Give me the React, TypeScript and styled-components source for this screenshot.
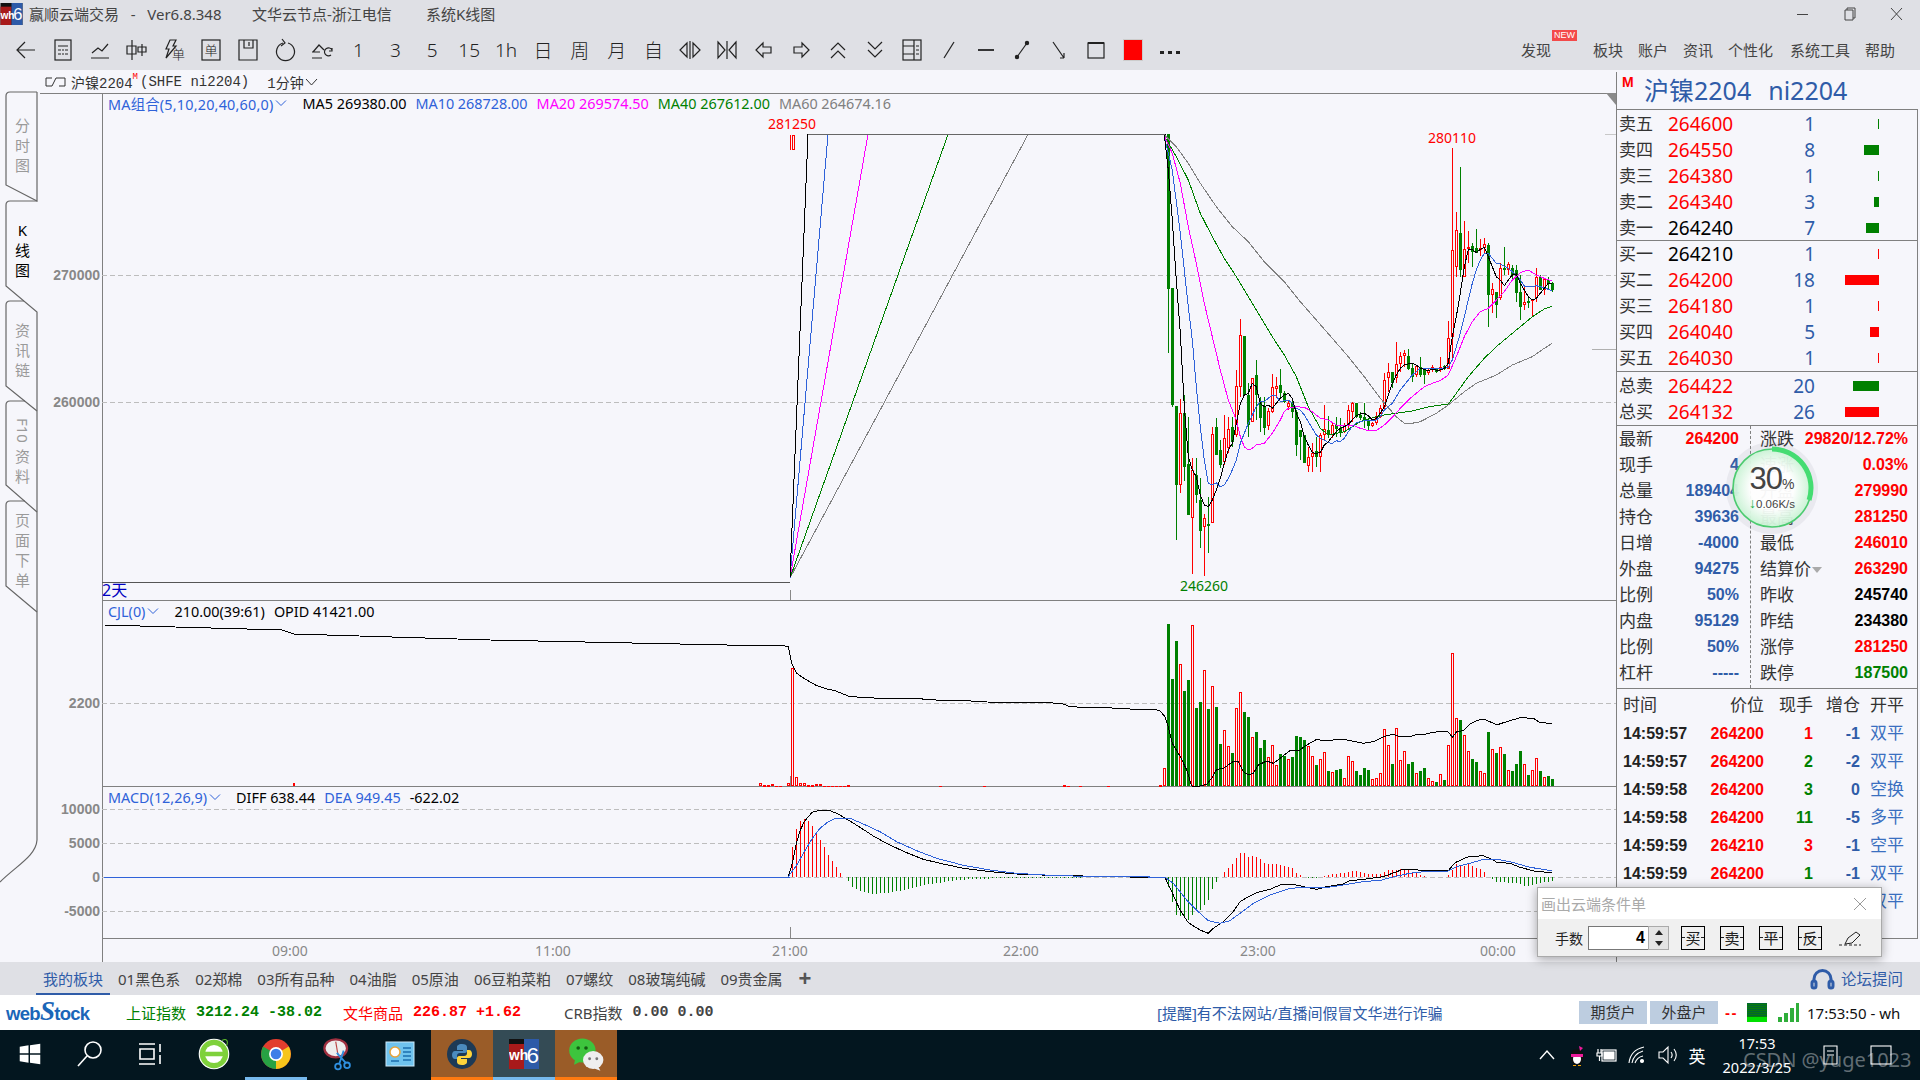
import React from "react";
import styled, { createGlobalStyle } from "styled-components";

const SANS = `"Noto Sans", "Noto Sans CJK SC", sans-serif`;
const ARIAL = `"Liberation Sans", "Noto Sans CJK SC", sans-serif`;
const MONO = `"Liberation Mono", "Noto Sans CJK SC", monospace`;
const BG = "#f6f6fb";
const RED = "#ff0000";
const GREEN = "#008000";
const BLUE = "#2f5ca8";
const LINEBLUE = "#2f62d9";
const RULE = "#808080";

const Global = createGlobalStyle`
  html, body { margin: 0; padding: 0; background: ${BG}; overflow: hidden; }
  * { box-sizing: border-box; }
`;

const Screen = styled.div`
  position: relative; width: 1920px; height: 1080px; display: flex; flex-direction: column;
  overflow: hidden; font-family: ${SANS}; background: ${BG};
`;
const TitleBar = styled.div`
  height: 27px; background: #dfe0e5; display: flex; align-items: center; color: #444; font-size: 15px;
`;
const TitleLogo = styled.svg`width: 23px; height: 22px; margin-right: 6px; flex: none;`;
const TitleText = styled.span<{ $w: number }>`width: ${p => p.$w}px; flex: none; white-space: nowrap;`;
const WinControls = styled.div`margin-left: auto; display: flex; align-items: center;`;
const WinBtn = styled.svg`width: 47px; height: 14px; stroke: #444; fill: none;`;
const ToolBar = styled.div`
  height: 43px; background: #dfe0e5; display: flex; align-items: center; padding: 2px 25px 0 8px;
`;
const Tool = styled.div`
  width: 36.9px; height: 30px; flex: none; display: flex; align-items: center; justify-content: center;
  font-size: 19px; font-weight: 300; color: #222; svg { width: 24px; height: 24px; stroke: #222; fill: none; stroke-width: 1.2; }
`;
const Menu = styled.div`margin-left: auto; display: flex; gap: 15px; font-size: 15px; color: #444;`;
const MenuItem = styled.span<{ $after?: number }>`
  position: relative; margin-right: ${p => p.$after ?? 0}px; white-space: nowrap;
`;
const NewBadge = styled.span`
  position: absolute; left: 31px; top: -9px; width: 25px; height: 11px; background: #f34a4a; color: #fff;
  font: 9px/11px ${ARIAL}; text-align: center;
`;
const Main = styled.div`flex: 1; display: flex; min-height: 0; background: ${BG};`;
const LeftArea = styled.div`width: 1616px; flex: none; display: flex; flex-direction: column;`;
const InfoRow = styled.div`
  height: 23px; display: flex; align-items: center; padding-left: 45px; font: 14px ${MONO}; color: #333; flex: none; white-space: pre;
`;
const InfoIcon = styled.svg`width: 21px; height: 12px; margin-right: 5px; stroke: #333; fill: none;`;
const InfoSup = styled.span`color: ${RED}; font-size: 9px; line-height: 9px; align-self: flex-start; margin: 3px 2px 0 0;`;
const Period = styled.span`margin-left: 18px; display: inline-flex; align-items: center; gap: 1px;`;
const Body = styled.div`flex: 1; display: flex; min-height: 0;`;
const Rail = styled.div`position: relative; width: 37px; flex: none; display: flex; flex-direction: column;`;
const RailShape = styled.svg`position: absolute; left: 0; top: 0; width: 38px; height: 869px; overflow: visible; fill: none; stroke: #666; stroke-width: 1.2;`;
const RailTab = styled.div<{ $h: number; $pt: number; $on?: boolean }>`
  position: relative; height: ${p => p.$h}px; padding: ${p => p.$pt}px 0 0 8px; display: flex; flex-direction: column; align-items: center;
  font-size: 15px; line-height: 20px; color: ${p => (p.$on ? "#000" : "#9a9a9a")};
`;
const RailF10 = styled.span`writing-mode: vertical-rl; line-height: 15px; height: 28px;`;
const Stack = styled.div`flex: 1; display: flex; flex-direction: column; min-width: 0;`;
const Panel = styled.div<{ $h: number }>`position: relative; height: ${p => p.$h}px; flex: none;`;
const PanelSvg = styled.svg`position: absolute; left: 0; top: 0; width: 100%; height: 100%; font-family: ${ARIAL};`;
const Legend = styled.div`
  position: relative; display: flex; gap: 9px; align-items: center; height: 20px; padding-left: 71px;
  font-size: 14.4px; white-space: nowrap;
`;
const LegendItem = styled.span<{ $c: string; $wide?: boolean }>`
  color: ${p => p.$c}; display: inline-flex; align-items: center; letter-spacing: ${p => (p.$wide ? "0.2px" : "0")};
`;
const Chev = styled.svg`width: 12px; height: 8px; margin: 0 6px 0 2px; fill: none; stroke: ${LINEBLUE};`;

const RightPanel = styled.div`
  width: 304px; flex: none; margin-top: 2px; border-left: 1px solid ${RULE}; display: flex; flex-direction: column;
`;
const QuoteTitle = styled.div`
  position: relative; height: 37px; flex: none; padding-left: 27px; font-size: 25px; line-height: 36px; color: ${BLUE}; display: flex; gap: 17px;
`;
const TitleM = styled.span`position: absolute; left: 5px; top: 2px; color: ${RED}; font: bold 14px/16px ${ARIAL};`;
const Box = styled.div`
  flex: 1; margin: 0 2px 23px 0; border: 1px solid ${RULE}; border-left: none; display: flex; flex-direction: column; min-height: 0;
`;
const Section = styled.div<{ $h: number; $pt?: number }>`
  height: ${p => p.$h}px; flex: none; padding-top: ${p => p.$pt ?? 0}px; border-bottom: 1px solid ${RULE};
`;
const BookRow = styled.div`
  height: 26px; display: grid; grid-template-columns: 49px 90px 57px 64px; align-items: center; padding-left: 2px;
`;
const Lab = styled.span`font-size: 17px; color: #333; white-space: nowrap; line-height: 26px;`;
const BookPrice = styled.span<{ $c: string }>`font: 19px ${SANS}; color: ${p => p.$c};`;
const BookQty = styled.span`font: 19px ${SANS}; color: ${BLUE}; text-align: right;`;
const BookBar = styled.i<{ $c: string; $w: number }>`
  justify-self: end; display: block; height: 10px; width: ${p => p.$w}px; background: ${p => p.$c};
`;
const InfoGrid = styled.div`
  height: 263px; flex: none; border-bottom: 1px solid ${RULE}; display: grid; grid-template-columns: 133px 168px;
`;
const InfoCol = styled.div<{ $right?: boolean }>`
  ${p => (p.$right ? `padding: 0 10px 0 9px; border-left: 1px dashed ${RULE};` : `padding: 0 11px 0 2px;`)}
`;
const InfoLine = styled.div`height: 26px; display: flex; justify-content: space-between; align-items: center;`;
const InfoVal = styled.span<{ $c: string }>`font: bold 16px ${ARIAL}; color: ${p => p.$c}; white-space: nowrap;`;
const LabTri = styled.i`
  display: inline-block; margin-left: 1px; border: 5px solid transparent; border-top: 6px solid #aaa; border-bottom: none; vertical-align: middle;
`;
const TradeGrid = styled.div`
  display: grid; grid-template-columns: 84px 57px 49px 47px 44px; padding-left: 6px; align-items: center;
`;
const TradeHead = styled(TradeGrid)`height: 30px; padding-bottom: 2px; font-size: 17px; color: #333; > :not(:first-child) { text-align: right; }`;
const TradeRow = styled(TradeGrid)`height: 28px;`;
const TradeTime = styled.span`font: bold 16px ${ARIAL}; color: #222;`;
const TradeNum = styled.span<{ $c: string }>`font: bold 16px ${ARIAL}; color: ${p => p.$c}; text-align: right;`;
const TradeType = styled.span`font-size: 17px; color: #3a6fc0; text-align: right; white-space: nowrap; padding-bottom: 5px;`;

const TabBar = styled.div`
  height: 33px; flex: none; background: #dfe0e5; display: flex; align-items: center; gap: 15px; padding: 0 17px 0 43px; font-size: 15px; color: #444;
`;
const BoardTab = styled.span<{ $on?: boolean }>`
  position: relative; white-space: nowrap; color: ${p => (p.$on ? BLUE : "#444")};
  ${p => p.$on ? `&::after { content: ""; position: absolute; left: -7px; right: -7px; bottom: -6px; height: 2px; background: ${BLUE}; }` : ""}
`;
const Plus = styled.span`font: bold 22px/20px ${ARIAL}; color: #555; margin-left: 1px;`;
const Forum = styled.span`margin-left: auto; color: ${BLUE}; display: flex; align-items: center; gap: 6px; font-size: 15.5px;`;
const ForumIcon = styled.svg`width: 25px; height: 22px; fill: none; stroke: ${BLUE}; stroke-width: 3;`;

const StatusBar = styled.div`height: 35px; flex: none; background: #fff; display: flex; align-items: center;`;
const Logo = styled.div`
  width: 126px; flex: none; padding-left: 6px; font: bold 18.5px ${ARIAL}; color: #1b66b8; letter-spacing: -0.7px; white-space: nowrap;
`;
const LogoS = styled.span`font-size: 27px; line-height: 20px; font-family: "Liberation Serif", serif; font-style: italic;`;
const Quote = styled.div<{ $w: number; $c: string }>`
  width: ${p => p.$w}px; flex: none; color: ${p => p.$c}; font-size: 15px; display: flex; gap: 10px; white-space: nowrap;
`;
const QuoteNum = styled.span`font: bold 15px/22px ${MONO};`;
const Notice = styled.div`width: 422px; flex: none; color: ${BLUE}; font-size: 15px; white-space: nowrap;`;
const AcctBtn = styled.div`
  width: 68px; height: 23px; background: #bdcde0; color: #333; font-size: 15px; line-height: 22px; text-align: center; margin-right: 3px; flex: none;
`;
const Dashes = styled.span`color: ${RED}; font: bold 15px ${ARIAL}; margin: 0 9px 0 4px; letter-spacing: 1.5px;`;
const NetBlock = styled.i`display: block; width: 20px; height: 19px; background: repeating-linear-gradient(0deg, #0a7a0a 0 1px, #063 1px 2px); border-bottom: 5px solid #00e000;`;
const Signal = styled.svg`width: 22px; height: 19px; margin: 0 8px 0 10px; fill: #2fae3a;`;
const Clock = styled.span`font-size: 15px; color: #111; white-space: nowrap;`;

const TaskBar = styled.div`height: 50px; flex: none; background: #03161f; display: flex; align-items: stretch;`;
const TaskSlot = styled.div<{ $w?: number; $bg?: string; $bar?: string }>`
  width: ${p => p.$w ?? 62}px; flex: none; display: flex; align-items: center; justify-content: center; background: ${p => p.$bg ?? "transparent"};
  border-bottom: 3px solid ${p => p.$bar ?? "transparent"};
  svg { width: 30px; height: 30px; }
`;
const TaskGap = styled.div`width: 3px; flex: none;`;
const Tray = styled.div`margin-left: auto; margin-right: 16px; display: flex; align-items: center; color: #fff;`;
const TrayCell = styled.div<{ $w: number }>`
  width: ${p => p.$w}px; flex: none; display: flex; justify-content: center; align-items: center; font-size: 17px;
  svg { width: 22px; height: 22px; stroke: #fff; fill: none; }
`;
const ClockCell = styled.div`width: 90px; flex: none; text-align: center; font-size: 14.5px; line-height: 24px; color: #fff;`;
const Watermark = styled.div`
  position: absolute; left: 1743px; top: 1046px; font-size: 20px; color: rgba(255,255,255,.38); white-space: nowrap; pointer-events: none;
`;

const Speed = styled.div`position: absolute; left: 1725px; top: 441px; width: 94px; height: 94px;`;
const SpeedRing = styled.svg`position: absolute; inset: 0; width: 94px; height: 94px;`;
const SpeedPct = styled.div`
  position: absolute; left: 0; right: 0; top: 22px; text-align: center; color: #444; font-size: 31px; line-height: 32px; font-family: ${ARIAL}; letter-spacing: -1px;
  small { font-size: 14px; letter-spacing: 0; }
`;
const SpeedRate = styled.div`
  position: absolute; left: 0; right: 0; top: 55px; text-align: center; color: #444; font: 11.5px/14px ${ARIAL};
  b { color: #18b248; font-weight: bold; font-size: 14px; }
`;

const Dialog = styled.div`
  position: absolute; left: 1537px; top: 887px; width: 345px; height: 70px; background: #f0f0f0; border: 1px solid #aaa;
  box-shadow: 0 2px 10px rgba(0,0,0,.35); display: flex; flex-direction: column;
`;
const DialogHead = styled.div`
  height: 31px; background: #fff; display: flex; align-items: center; justify-content: space-between; padding: 0 14px 0 3px; color: #aaa; font-size: 15px;
  svg { width: 14px; height: 14px; stroke: #999; }
`;
const DialogBody = styled.div`flex: 1; display: flex; align-items: center; padding: 0 0 0 17px; color: #222; font-size: 14px;`;
const QtyBox = styled.div`
  margin-left: 5px; width: 60px; height: 24px; background: #fff; border: 1px solid #777; border-right: none; text-align: right;
  padding-right: 3px; font: bold 16px/22px ${ARIAL}; color: #000;
`;
const Spin = styled.div`
  width: 21px; height: 24px; border: 1px solid #aaa; background: #e4e4e4; display: flex; flex-direction: column; align-items: center; justify-content: space-around; margin-right: 12px;
`;
const SpinTri = styled.i<{ $up?: boolean }>`
  display: block; border: 4px solid transparent; ${p => (p.$up ? "border-bottom: 5px solid #222; border-top: none;" : "border-top: 5px solid #222; border-bottom: none;")}
`;
const OrderBtn = styled.div`
  position: relative; width: 24px; height: 24px; border: 1px solid #000; margin-right: 15px; text-align: center; font-size: 15px; line-height: 22px; color: #222; flex: none;
  &::after { content: ""; position: absolute; left: 0; right: 0; top: 10px; border-top: 1px dashed #222; }
`;
const Pen = styled.svg`width: 26px; height: 24px; stroke: #222; fill: none;`;

/* ---------- data ---------- */
type P = [number, number];
const pts = (a: number[], ox: number, oy: number): string => {
  const o: string[] = [];
  for (let i = 0; i < a.length; i += 2) o.push(`${(ox + a[i] / 3).toFixed(1)},${(oy + a[i + 1] / 3).toFixed(1)}`);
  return o.join(" ");
};
// [red?, high, bodyTop, bodyBottom, low] in 3x crop units
const CANDLES: number[][] = [
  [0,43,43,507,700],[0,505,505,855,860],[0,858,858,1095,1260],[1,838,880,1095,1118],[0,825,880,1040,1082],[0,892,1033,1185,1185],
  [1,1015,1050,1195,1362],[0,1015,1065,1125,1150],[0,1075,1140,1232,1285],[1,1183,1195,1222,1368],[0,1130,1212,1218,1298],[1,922,943,1210,1210],
  [0,895,922,1005,1005],[0,960,990,1035,1045],[1,885,955,1025,1035],[1,890,928,985,1000],[0,890,922,965,980],[1,750,798,945,950],
  [1,597,646,802,830],[0,648,648,825,825],[0,790,825,915,950],[1,775,775,905,905],[0,720,765,825,900],[0,830,845,895,935],
  [0,830,860,925,945],[1,865,873,918,930],[1,762,802,876,880],[1,770,797,808,835],[0,748,795,820,830],[0,812,820,845,850],
  [1,840,848,860,870],[0,840,848,875,895],[0,870,875,975,1008],[0,930,930,950,1020],[0,945,945,1030,1030],[1,980,1012,1038,1055],
  [1,970,1000,1012,1055],[0,950,992,1012,1040],[1,940,945,1010,1055],[1,855,928,945,960],[0,888,930,942,955],[1,905,915,945,955],
  [0,890,915,928,950],[0,895,925,935,950],[1,910,915,935,940],[1,855,870,915,925],[1,845,850,875,905],[0,848,848,890,895],
  [0,875,885,893,900],[0,850,892,902,925],[0,895,903,918,930],[1,905,910,918,920],[1,875,888,910,915],[1,855,865,890,895],
  [1,760,780,862,870],[1,730,755,775,815],[0,755,755,790,805],[1,665,733,775,790],[1,695,708,733,755],[1,690,698,708,740],
  [0,688,708,748,750],[0,730,743,770,785],[1,735,738,765,770],[0,712,742,765,770],[0,745,750,765,792],[1,745,750,760,765],
  [1,735,742,750,755],[0,745,748,755,760],[1,712,740,750,755],[0,735,738,748,750],[1,603,655,748,748],[1,85,390,650,720],
  [1,277,330,440,470],[0,142,340,450,470],[1,303,388,470,470],[1,333,380,385,430],[0,370,378,395,442],[0,327,383,398,400],
  [1,358,383,390,408],[1,355,373,385,400],[0,370,375,525,620],[1,490,508,525,580],[0,517,517,555,595],[1,430,445,535,540],
  [0,380,445,450,465],[1,425,433,450,465],[0,435,445,465,480],[0,435,450,518,545],[0,465,517,560,600],[1,495,545,555,570],
  [0,530,543,550,565],[1,540,538,541,592],[1,445,472,535,545],[0,465,472,510,510],[1,475,478,510,525],[0,470,480,488,510],[0,485,490,510,515],
];
const MA5 = [103,45,115,150,127,300,139,480,151,640,163,860,175,1010,187,1050,199,1070,211,1125,223,1155,235,1160,247,1140,259,1110,271,1075,283,1030,295,990,307,970,319,910,331,850,343,825,355,820,367,790,379,800,391,850,403,860,415,855,427,865,439,850,451,835,463,825,475,820,487,835,499,880,511,905,523,950,535,975,547,998,559,1000,571,998,583,975,595,965,607,950,619,935,631,925,643,920,655,913,667,900,679,888,691,882,703,880,715,887,727,900,739,895,751,880,763,860,775,825,787,790,799,765,811,745,823,735,835,732,847,730,859,735,871,745,883,748,895,752,907,748,919,750,931,750,943,745,955,730,967,650,979,590,991,520,1003,440,1015,390,1027,388,1039,398,1051,388,1063,382,1075,410,1087,440,1099,470,1111,480,1123,497,1135,480,1147,465,1159,462,1171,490,1183,510,1195,530,1207,540,1219,535,1231,520,1243,505,1255,490,1267,490];
const MA10 = [103,50,127,150,151,340,175,560,187,660,199,800,211,920,223,1020,235,1090,247,1095,259,1088,271,1100,283,1095,295,1075,307,1050,319,1020,331,970,343,940,355,910,367,885,379,860,391,845,403,845,415,835,427,825,439,828,451,845,463,842,475,840,487,850,499,865,511,870,523,885,535,905,547,925,559,945,571,955,583,960,595,968,607,970,619,962,631,965,643,955,655,935,667,920,679,908,691,905,703,902,715,902,739,900,751,890,763,870,775,860,787,850,799,830,811,810,823,795,835,780,847,765,859,755,871,745,895,745,931,745,955,742,967,720,979,680,991,640,1003,590,1015,540,1027,490,1039,450,1051,420,1063,400,1075,400,1087,415,1099,430,1111,432,1135,445,1147,455,1159,465,1171,480,1183,498,1195,498,1207,500,1219,497,1231,500,1243,503,1255,508,1267,512];
const MA20 = [103,48,127,100,151,190,175,320,199,430,223,550,247,650,271,750,295,840,319,900,331,950,343,980,355,990,367,985,379,975,403,970,427,940,451,900,463,875,475,865,499,860,523,862,547,875,571,895,595,900,619,915,643,915,667,915,691,925,715,932,739,932,763,915,787,892,811,865,835,840,859,820,883,800,907,790,931,782,955,765,979,710,1003,650,1027,605,1051,575,1075,565,1099,540,1123,515,1147,480,1171,458,1195,450,1219,465,1243,475,1267,483];
const MA40 = [103,48,139,110,175,180,211,280,247,350,283,415,319,470,355,530,391,590,427,650,463,705,499,770,535,860,571,925,595,945,643,935,691,905,739,890,763,885,799,880,847,873,899,860,955,852,979,820,1015,770,1063,715,1099,680,1135,650,1171,620,1207,590,1243,567,1267,558];
const MA60 = [103,45,139,80,175,130,211,190,259,260,307,320,355,365,403,425,463,485,511,545,559,600,607,655,655,710,703,770,751,835,799,890,823,910,835,912,871,905,919,880,955,855,1003,815,1039,790,1099,765,1147,735,1207,710,1243,685,1267,670];

// [red?, top] from x=91 step 12
const VOL: number[][] = [[1,556],[1,505],[0,72],[0,238],[0,123],[1,193],[0,273],[0,240],[1,76],[0,324],[0,306],[1,211],[0,327],[1,259],[0,321],[0,432],[1,391],[1,438],[0,459],[1,325],[1,277],[0,336],[0,351],[1,412],[0,396],[0,444],[0,420],[1,472],[1,436],[1,496],[0,462],[0,468],[1,478],[0,471],[0,408],[0,411],[0,420],[1,438],[1,469],[0,495],[1,478],[1,457],[0,513],[1,517],[0,510],[0,507],[1,535],[1,469],[1,484],[0,513],[0,525],[0,504],[0,510],[1,538],[1,535],[1,520],[1,388],[1,436],[0,492],[1,385],[1,481],[1,454],[0,492],[0,486],[1,520],[0,513],[0,504],[1,535],[1,544],[0,546],[1,523],[0,540],[1,436],[1,160],[1,355],[0,360],[1,406],[1,454],[0,477],[0,486],[1,514],[1,520],[0,396],[1,448],[0,459],[1,442],[0,462],[1,511],[0,513],[0,492],[0,453],[1,492],[0,525],[1,511],[1,475],[0,513],[1,531],[0,528],[0,537]];
const VOL_L: P[] = [[31,550],[43,555],[55,555],[67,552],[79,558],[91,558],[115,550],[127,205],[139,532],[151,550],[163,550],[175,555],[187,555],[199,552],[211,552],[223,558],[235,558],[247,558],[259,558],[271,558],[283,558],[295,555],[571,558],[703,558],[943,555],[955,558],[991,558],[1075,558]];
const CJL_R = [0,328,75,328,90,333,105,350,115,380,127,430,151,470,170,510,185,558,200,560,230,553,245,535,260,508,280,505,295,495,310,484,325,484,340,515,355,525,370,520,385,495,410,483,430,490,450,475,480,452,510,450,530,435,560,418,580,422,640,418,670,424,700,430,730,425,760,410,790,403,810,410,840,410,860,403,885,403,910,397,950,393,958,400,967,412,980,395,1000,392,1020,372,1040,362,1060,357,1080,365,1100,375,1120,368,1140,362,1170,353,1210,355,1230,368,1265,370];
const CJL_L = [0,137,100,137,115,140,125,190,140,220,165,237,200,257,230,267,255,272,295,288,330,292,390,295,505,296,570,301,650,302,710,306,900,308,940,312,955,318,990,322,1070,323,1140,327,1200,328];
const DIFF_L = [115,830,127,790,139,730,151,690,163,665,175,650,187,637,205,632,240,632,265,642,295,660,330,682,370,708,415,733,470,758,520,778,580,792,640,805,720,815,800,822,900,826,1000,828,1200,832];
const DEA_L = [115,830,140,795,163,755,187,715,210,685,235,665,258,655,300,655,340,672,390,695,440,725,500,752,560,775,640,796,720,810,800,820,900,826,1000,829,1200,830];
const DIFF_R = [0,832,105,832,125,875,150,930,175,968,210,990,235,1000,250,985,280,965,310,935,330,905,355,890,380,878,420,868,450,855,490,853,530,862,560,868,590,860,640,852,660,842,700,838,760,830,800,815,820,808,860,808,870,812,910,812,955,812,975,788,1015,770,1060,767,1090,780,1100,787,1140,790,1170,802,1220,815,1265,817];
const DEA_R = [0,830,105,832,130,850,170,900,205,935,235,962,270,970,300,962,330,940,370,910,420,885,480,865,530,862,580,864,640,855,700,845,755,840,800,828,840,820,880,815,950,815,980,800,1020,790,1060,778,1100,778,1140,785,1200,802,1265,812];
const HIST_L_R = [740,687,662,657,662,678,700,720,740,765,783,800,818];
const HIST_L_G = [843,860,868,873,877,880,882,882,880,880,878,876,874,872,870,868,864,861,858,856,853,852,850,848,846,844,842,841,840,839,838,838,837,837,836,836,835,835,835,835,834,834,834,834,834,834,834,834,834,834,834,834,834,834,834,834,834,834,834];
const HIST_R: P[] = [[115,862],[127,905],[139,945],[151,948],[163,950],[175,960],[187,945],[199,932],[211,930],[223,915],[235,900],[247,866],[259,846],[535,834],[547,834],[559,834],[1087,838],[1099,845],[1111,847],[1123,847],[1135,848],[1147,848],[1159,850],[1171,853],[1183,857],[1195,857],[1207,856],[1219,853],[1231,850],[1243,847],[1255,845],[1267,843]];
const HIST_R_RED: P[] = [[283,815],[295,803],[307,792],[319,775],[331,760],[343,760],[355,772],[367,768],[379,772],[391,778],[403,790],[415,792],[427,792],[439,792],[451,795],[463,797],[475,800],[487,805],[499,820],[511,825],[583,827],[595,824],[607,822],[619,822],[631,820],[643,818],[655,815],[667,813],[679,813],[691,816],[703,820],[715,822],[727,823],[739,823],[751,822],[763,815],[775,811],[787,810],[799,810],[811,808],[823,808],[835,808],[847,815],[859,820],[871,826],[883,828],[895,831],[907,831],[955,825],[967,810],[979,792],[991,797],[1003,797],[1015,793],[1027,797],[1039,803],[1051,808],[1063,815],[1075,830]];

const BOOK = [
  { l: "卖五", p: "264600", q: "1", w: 1, pc: RED, bc: GREEN },
  { l: "卖四", p: "264550", q: "8", w: 15, pc: RED, bc: GREEN },
  { l: "卖三", p: "264380", q: "1", w: 1, pc: RED, bc: GREEN },
  { l: "卖二", p: "264340", q: "3", w: 5, pc: RED, bc: GREEN },
  { l: "卖一", p: "264240", q: "7", w: 13, pc: "#000", bc: GREEN },
];
const BUY = [
  { l: "买一", p: "264210", q: "1", w: 1, pc: "#000", bc: RED },
  { l: "买二", p: "264200", q: "18", w: 34, pc: RED, bc: RED },
  { l: "买三", p: "264180", q: "1", w: 1, pc: RED, bc: RED },
  { l: "买四", p: "264040", q: "5", w: 9, pc: RED, bc: RED },
  { l: "买五", p: "264030", q: "1", w: 1, pc: RED, bc: RED },
];
const TOTAL = [
  { l: "总卖", p: "264422", q: "20", w: 26, pc: RED, bc: GREEN },
  { l: "总买", p: "264132", q: "26", w: 34, pc: RED, bc: RED },
];
const INFO_L = [["最新","264200",RED],["现手","4",BLUE],["总量","189404",BLUE],["持仓","39636",BLUE],["日增","-4000",BLUE],["外盘","94275",BLUE],["比例","50%",BLUE],["内盘","95129",BLUE],["比例","50%",BLUE],["杠杆","-----",BLUE]];
const INFO_R = [["涨跌","29820/12.72%",RED],["速涨","0.03%",RED],["开盘","279990",RED],["最高","281250",RED],["最低","246010",RED],["结算价","263290",RED],["昨收","245740","#000"],["昨结","234380","#000"],["涨停","281250",RED],["跌停","187500",GREEN]];
const TRADES = [
  ["14:59:57","264200","1",RED,"-1","双平"],["14:59:57","264200","2",GREEN,"-2","双平"],["14:59:58","264200","3",GREEN,"0","空换"],
  ["14:59:58","264200","11",GREEN,"-5","多平"],["14:59:59","264210","3",RED,"-1","空平"],["14:59:59","264200","1",GREEN,"-1","双平"],["14:59:59","264200","1",RED,"-1","双平"],
];
const BOARDS = ["01黑色系","02郑棉","03所有品种","04油脂","05原油","06豆粕菜粕","07螺纹","08玻璃纯碱","09贵金属"];

/* ---------- chart parts ---------- */
const Ln: React.FC<{ p: string; c: string }> = ({ p, c }) => <polyline points={p} fill="none" stroke={c} strokeWidth={1} shapeRendering="crispEdges" />;
const Grid: React.FC<{ y: number; x1?: number; x2?: number }> = ({ y, x1 = 102, x2 = 1616 }) => (
  <line x1={x1} x2={x2} y1={y + 0.5} y2={y + 0.5} stroke="#bdbdbd" strokeDasharray="5 3" shapeRendering="crispEdges" />
);
const Ax: React.FC<{ y: number; t: string }> = ({ y, t }) => (
  <text x={100} y={y + 5} textAnchor="end" fontSize={14} fontWeight="bold" fill="#888">{t}</text>
);
const VLine: React.FC<{ y1: number; y2: number }> = ({ y1, y2 }) => (
  <line x1={102.5} x2={102.5} y1={y1} y2={y2} stroke={RULE} shapeRendering="crispEdges" />
);
const colX = (zx: number, ox: number) => Math.round(ox + (zx - 1) / 3);

const Candles = () => (
  <g shapeRendering="crispEdges">
    {CANDLES.map((c, i) => {
      const x = 1168 + 4 * i;
      const col = c[0] ? RED : GREEN;
      const y = (v: number) => Math.round(120 + v / 3);
      return (
        <g key={i}>
          <line x1={x + 0.5} x2={x + 0.5} y1={y(c[1])} y2={y(c[4])} stroke={col} />
          {c[0] ? (
            <rect x={x - 0.5} y={y(c[2]) + 0.5} width={2} height={Math.max(1, y(c[3]) - y(c[2]) - 1)} fill={BG} stroke={col} />
          ) : (
            <rect x={x - 1} y={y(c[2])} width={3} height={Math.max(1, y(c[3]) - y(c[2]))} fill={col} />
          )}
        </g>
      );
    })}
  </g>
);

const PricePanel = () => (
  <Panel $h={508}>
    <PanelSvg viewBox="37 93 1579 508">
      <line x1={40} x2={1616} y1={93.5} y2={93.5} stroke={RULE} />
      <line x1={102} x2={1616} y1={600.5} y2={600.5} stroke={RULE} shapeRendering="crispEdges" />
      <VLine y1={93} y2={601} />
      <Grid y={275} /><Grid y={402} />
      <line x1={1605} x2={1616} y1={134.5} y2={134.5} stroke="#c8c8c8" shapeRendering="crispEdges" />
      <line x1={1592} x2={1616} y1={349.5} y2={349.5} stroke="#b0b0b0" shapeRendering="crispEdges" />
      <polygon points="1606,93 1616,93 1616,105" fill="#8a8a8a" />
      <line x1={102} x2={790} y1={582.5} y2={582.5} stroke="#555" shapeRendering="crispEdges" />
      <line x1={790.5} x2={790.5} y1={590} y2={600} stroke="#888" shapeRendering="crispEdges" />
      <g shapeRendering="crispEdges">
        <line x1={790.5} x2={790.5} y1={135} y2={150} stroke={RED} />
        <rect x={792.5} y={135.5} width={2} height={14} fill={BG} stroke={RED} />
      </g>
      <Candles />
      <Ln c="#808080" p={`790,578 1028,134.5 1165,134.5 ${pts(MA60, 1130, 120)}`} />
      <Ln c={GREEN} p={`790,578 948,134.5 1165,134.5 ${pts(MA40, 1130, 120)}`} />
      <Ln c="#ff00ff" p={`790,578 868,134.5 1165,134.5 ${pts(MA20, 1130, 120)}`} />
      <Ln c={LINEBLUE} p={`790,578 828,134.5 1165,134.5 ${pts(MA10, 1130, 120)}`} />
      <Ln c="#000" p={`790,578 808,134.5 1165,134.5 ${pts(MA5, 1130, 120)}`} />
      <line x1={808} x2={1165} y1={134.5} y2={134.5} stroke="#666" shapeRendering="crispEdges" />
      <Ax y={275} t="270000" /><Ax y={402} t="260000" />
      <g fontFamily={SANS} fontSize={14} textAnchor="middle">
        <text x={792} y={129} fill={RED}>281250</text>
        <text x={1452} y={143} fill={RED}>280110</text>
        <text x={1204} y={591} fill={GREEN}>246260</text>
      </g>
      <text x={102} y={596} fontSize={16} fontFamily={SANS} fill="#0000c0">2天</text>
    </PanelSvg>
    <Legend>
      <LegendItem $c={LINEBLUE} $wide>MA组合(5,10,20,40,60,0)<Chev viewBox="0 0 12 8"><path d="M1 1.5l5 5 5-5" /></Chev></LegendItem>
      <LegendItem $c="#000">MA5 269380.00</LegendItem>
      <LegendItem $c={LINEBLUE}>MA10 268728.00</LegendItem>
      <LegendItem $c="#ff00ff">MA20 269574.50</LegendItem>
      <LegendItem $c={GREEN}>MA40 267612.00</LegendItem>
      <LegendItem $c="#808080">MA60 264674.16</LegendItem>
    </Legend>
  </Panel>
);

const VolumePanel = () => (
  <Panel $h={186}>
    <PanelSvg viewBox="37 601 1579 186">
      <VLine y1={601} y2={787} />
      <line x1={102} x2={1616} y1={786.5} y2={786.5} stroke={RULE} shapeRendering="crispEdges" />
      <Grid y={703} />
      <Ax y={703} t="2200" />
      <line x1={790.5} x2={790.5} y1={776} y2={786} stroke="#888" shapeRendering="crispEdges" />
      <g shapeRendering="crispEdges">
        <rect x={293} y={783} width={2} height={3} fill={RED} />
        {VOL_L.map(([x, t], i) => {
          const px = colX(x, 750);
          const top = Math.round(600 + t / 3);
          return <rect key={i} x={px - 0.5} y={top + 0.5} width={2} height={Math.max(1, 786 - top - 1)} fill={BG} stroke={RED} />;
        })}
        {VOL.map((v, i) => {
          const x = 1160 + 4 * i;
          const top = Math.round(600 + v[1] / 3);
          return v[0] ? (
            <rect key={i} x={x - 0.5} y={top + 0.5} width={2} height={Math.max(1, 786 - top - 1)} fill={BG} stroke={RED} />
          ) : (
            <rect key={i} x={x - 1} y={top} width={3} height={786 - top} fill={GREEN} />
          );
        })}
      </g>
      <Ln c="#000" p={`104,625 282,630 294,634 490,640 750,645.5 ${pts(CJL_L, 750, 600)}`} />
      <Ln c="#000" p={pts(CJL_R, 1130, 600)} />
    </PanelSvg>
    <Legend>
      <LegendItem $c={LINEBLUE}>CJL(0)<Chev viewBox="0 0 12 8"><path d="M1 1.5l5 5 5-5" /></Chev></LegendItem>
      <LegendItem $c="#000">210.00(39:61)</LegendItem>
      <LegendItem $c="#000">OPID 41421.00</LegendItem>
    </Legend>
  </Panel>
);

const MacdPanel = () => (
  <Panel $h={152}>
    <PanelSvg viewBox="37 787 1579 152">
      <VLine y1={787} y2={939} />
      <line x1={102} x2={1616} y1={938.5} y2={938.5} stroke={RULE} shapeRendering="crispEdges" />
      <Grid y={809} /><Grid y={843} /><Grid y={877} /><Grid y={911} />
      <Ax y={809} t="10000" /><Ax y={843} t="5000" /><Ax y={877} t="0" /><Ax y={911} t="-5000" />
      <line x1={790.5} x2={790.5} y1={927} y2={938} stroke="#888" shapeRendering="crispEdges" />
      <g shapeRendering="crispEdges">
        {HIST_L_R.map((t, i) => <line key={i} x1={792.5 + 4 * i} x2={792.5 + 4 * i} y1={600 + t / 3} y2={877} stroke={RED} />)}
        {HIST_L_G.map((b, i) => <line key={i} x1={848.5 + 4 * i} x2={848.5 + 4 * i} y1={877} y2={600 + b / 3} stroke={GREEN} />)}
        {HIST_R.map(([x, b], i) => <line key={i} x1={colX(x, 1130) + 0.5} x2={colX(x, 1130) + 0.5} y1={877} y2={600 + b / 3} stroke={GREEN} />)}
        {HIST_R_RED.map(([x, t], i) => <line key={i} x1={colX(x, 1130) + 0.5} x2={colX(x, 1130) + 0.5} y1={600 + t / 3} y2={877} stroke={RED} />)}
      </g>
      <Ln c="#000" p={`104,877.5 790,877.5 ${pts(DIFF_L, 750, 600)} ${pts(DIFF_R, 1130, 600)}`} />
      <Ln c={LINEBLUE} p={`104,877.5 790,877.5 ${pts(DEA_L, 750, 600)} ${pts(DEA_R, 1130, 600)}`} />
    </PanelSvg>
    <Legend>
      <LegendItem $c={LINEBLUE}>MACD(12,26,9)<Chev viewBox="0 0 12 8"><path d="M1 1.5l5 5 5-5" /></Chev></LegendItem>
      <LegendItem $c="#000">DIFF 638.44</LegendItem>
      <LegendItem $c={LINEBLUE}>DEA 949.45</LegendItem>
      <LegendItem $c="#000">-622.02</LegendItem>
    </Legend>
  </Panel>
);

const TimeAxis = () => (
  <Panel $h={23}>
    <PanelSvg viewBox="37 939 1579 23">
      <VLine y1={939} y2={962} />
      <g fontFamily={SANS} fontSize={14} fill="#888" textAnchor="middle">
        {[[290,"09:00"],[553,"11:00"],[790,"21:00"],[1021,"22:00"],[1258,"23:00"],[1498,"00:00"]].map(([x, t]) => (
          <text key={t as string} x={x as number} y={956}>{t}</text>
        ))}
      </g>
    </PanelSvg>
  </Panel>
);

/* ---------- toolbar icons ---------- */
const I: React.FC<{ children: React.ReactNode }> = ({ children }) => <Tool><svg viewBox="0 0 24 24">{children}</svg></Tool>;
const TT: React.FC<{ children: React.ReactNode }> = ({ children }) => <Tool>{children}</Tool>;

const Tools = () => (
  <>
    <I><path d="M21 12H4M11 4l-8 8 8 8" /></I>
    <I><rect x="4" y="2" width="16" height="20" /><path d="M7 8h10M7 12h3M11 12h2M14 12h3M7 16h3M11 16h2M14 16h3" /></I>
    <I><path d="M3 20h18M4 15l6-5 4 3 6-7" /></I>
    <I><path d="M7 2v20M17 6v12M2 8h9v8H2zM13 9h8v5h-8z" /></I>
    <I><path d="M8 2h6l-3 6h3L4 20l3-9H4z" /><text x="10" y="21" fontSize="13" stroke="none" fill="#222">单</text></I>
    <I><rect x="3" y="2" width="18" height="20" /><text x="12" y="17" fontSize="13" stroke="none" fill="#222" textAnchor="middle">单</text></I>
    <I><path d="M3 2h18v20H3zM8 2v8h9V2M13 4v4" /></I>
    <I><path d="M10 5a9 9 0 1 0 5 0M9 1l3 4-4 3" /></I>
    <I><path d="M2 20h10M3 14l6-7 5 5M2 14h8M22 12a4 4 0 1 0-1 5M22 10v3h-3" /></I>
    <TT>1</TT><TT>3</TT><TT>5</TT><TT>15</TT><TT>1h</TT><TT>日</TT><TT>周</TT><TT>月</TT><TT>自</TT>
    <I><path d="M12 3v18M9 5l-7 7 7 7zM15 5l7 7-7 7z" /></I>
    <I><path d="M12 3v18M3 4l7 8-7 8zM21 4l-7 8 7 8z" /></I>
    <I><path d="M11 5l-7 7 7 7v-4h8V9h-8z" /></I>
    <I><path d="M13 5l7 7-7 7v-4H5V9h8z" /></I>
    <I><path d="M5 12l7-7 7 7M5 20l7-7 7 7" /></I>
    <I><path d="M5 4l7 7 7-7M5 12l7 7 7-7" /></I>
    <I><rect x="3" y="2" width="18" height="20" /><path d="M14 2v20M3 8h11M3 16h11M16 8h3M16 12h3M16 16h3" /></I>
    <I><path d="M7 20L17 4" /></I>
    <I><path d="M4 12h16" strokeWidth="1.8" /></I>
    <I><path d="M7 19L17 5" /><circle cx="7" cy="19" r="1.6" fill="#222" /><circle cx="17" cy="5" r="1.6" fill="#222" /></I>
    <I><path d="M6 4l11 16M17 20v-5M17 20h-4" /></I>
    <I><rect x="4" y="5" width="16" height="15" /><path d="M4 5h16" strokeWidth="2" /></I>
    <Tool><svg viewBox="0 0 24 24" style={{ stroke: "none" }}><rect x="2" y="1" width="20" height="22" fill="#ccc" /><rect x="3" y="2" width="18" height="20" fill="#f00" /></svg></Tool>
    <Tool><svg viewBox="0 0 24 24" style={{ stroke: "none", fill: "#222" }}><rect x="2" y="13" width="4" height="3" /><rect x="10" y="13" width="4" height="3" /><rect x="18" y="13" width="4" height="3" /></svg></Tool>
  </>
);

const RailTabs = () => (
  <Rail>
    <RailShape viewBox="0 93 38 869">
      <path d="M37 92H10Q6 92 6 96V185L37 201V92" />
      <path d="M37 201H10Q6 201 6 205V286L37 312V840C36 856 16 866 0 882" />
      <path d="M24 301H10Q6 301 6 305V386L37 411" />
      <path d="M25 401H10Q6 401 6 405V485L37 512" />
      <path d="M25 501H10Q6 501 6 505V586L37 612" />
    </RailShape>
    <RailTab $h={107} $pt={22}><span>分</span><span>时</span><span>图</span></RailTab>
    <RailTab $h={100} $pt={20} $on><span>K</span><span>线</span><span>图</span></RailTab>
    <RailTab $h={100} $pt={20}><span>资</span><span>讯</span><span>链</span></RailTab>
    <RailTab $h={100} $pt={18}><RailF10>F10</RailF10><span>资</span><span>料</span></RailTab>
    <RailTab $h={100} $pt={10}><span>页</span><span>面</span><span>下</span><span>单</span></RailTab>
  </Rail>
);

const Book: React.FC<{ rows: typeof BOOK }> = ({ rows }) => (
  <>
    {rows.map(r => (
      <BookRow key={r.l}>
        <Lab>{r.l}</Lab>
        <BookPrice $c={r.pc}>{r.p}</BookPrice>
        <BookQty>{r.q}</BookQty>
        <BookBar $c={r.bc} $w={r.w} />
      </BookRow>
    ))}
  </>
);

const Right = () => (
  <RightPanel>
    <QuoteTitle><TitleM>M</TitleM><span>沪镍2204</span><span>ni2204</span></QuoteTitle>
    <Box>
      <Section $h={131} $pt={1}><Book rows={BOOK} /></Section>
      <Section $h={131}><Book rows={BUY} /></Section>
      <Section $h={54} $pt={1}><Book rows={TOTAL} /></Section>
      <InfoGrid>
        <InfoCol>{INFO_L.map(([l, v, c], i) => <InfoLine key={i}><Lab>{l}</Lab><InfoVal $c={c}>{v}</InfoVal></InfoLine>)}</InfoCol>
        <InfoCol $right>{INFO_R.map(([l, v, c], i) => (
          <InfoLine key={i}><Lab>{l}{l === "结算价" && <LabTri />}</Lab><InfoVal $c={c}>{v}</InfoVal></InfoLine>
        ))}</InfoCol>
      </InfoGrid>
      <TradeHead><span>时间</span><span>价位</span><span>现手</span><span>增仓</span><span>开平</span></TradeHead>
      {TRADES.map((t, i) => (
        <TradeRow key={i}>
          <TradeTime>{t[0]}</TradeTime>
          <TradeNum $c={RED}>{t[1]}</TradeNum>
          <TradeNum $c={t[3]}>{t[2]}</TradeNum>
          <TradeNum $c={BLUE}>{t[4]}</TradeNum>
          <TradeType>{t[5]}</TradeType>
        </TradeRow>
      ))}
    </Box>
  </RightPanel>
);

const SpeedWidget = () => (
  <Speed>
    <SpeedRing viewBox="0 0 94 94">
      <defs>
        <radialGradient id="sp"><stop offset="55%" stopColor="#fff" stopOpacity=".95" /><stop offset="100%" stopColor="#c9f3d4" stopOpacity=".95" /></radialGradient>
      </defs>
      <circle cx="47" cy="47" r="46" fill="#8a8a9a" opacity=".12" />
      <circle cx="47" cy="47" r="39" fill="url(#sp)" stroke="#4ccb70" strokeWidth="1.6" />
      <path d="M47 8A39 39 0 0 1 84.1 59" fill="none" stroke="#45dc72" strokeWidth="5" />
    </SpeedRing>
    <SpeedPct>30<small>%</small></SpeedPct>
    <SpeedRate><b>↓</b>0.06K/s</SpeedRate>
  </Speed>
);

const OrderDialog = () => (
  <Dialog>
    <DialogHead>
      <span>画出云端条件单</span>
      <svg viewBox="0 0 14 14"><path d="M1 1l12 12M13 1L1 13" /></svg>
    </DialogHead>
    <DialogBody>
      手数
      <QtyBox>4</QtyBox>
      <Spin><SpinTri $up /><SpinTri /></Spin>
      <OrderBtn>买</OrderBtn><OrderBtn>卖</OrderBtn><OrderBtn>平</OrderBtn><OrderBtn>反</OrderBtn>
      <Pen viewBox="0 0 26 24"><path d="M2 19h22" strokeDasharray="3 2" /><path d="M8 18l3-6 8-6 4 3-8 8z" /></Pen>
    </DialogBody>
  </Dialog>
);

const WhLogo = () => (
  <>
    <rect x="0" y="0" width="24" height="24" fill="#111" />
    <rect x="0" y="4" width="12" height="20" fill="#a81a1a" />
    <rect x="12" y="0" width="12" height="24" fill="#2d5aa8" />
    <text x="0" y="17" fontSize="11" fontWeight="bold" fill="#fff" fontFamily={ARIAL}>wh</text>
    <text x="14" y="19" fontSize="18" fill="#fff" fontFamily={ARIAL}>6</text>
  </>
);

const Task = () => (
  <TaskBar>
    <TaskSlot $w={60}><svg viewBox="0 0 30 30" style={{ width: 22, height: 22 }}><path fill="#fff" d="M1 5l12-2v11H1zM15 3l14-2v13H15zM1 16h12v11L1 25zM15 16h14v13l-14-2z" /></svg></TaskSlot>
    <TaskSlot $w={60}><svg viewBox="0 0 30 30" fill="none" stroke="#fff" strokeWidth="1.6"><circle cx="18" cy="11" r="8" /><path d="M12 17l-9 10" /></svg></TaskSlot>
    <TaskSlot $w={60}><svg viewBox="0 0 30 30" fill="none" stroke="#fff" strokeWidth="1.6"><path d="M4 5h16M4 25h16M5 10h14v10H5zM25 5v8M25 16v9" /></svg></TaskSlot>
    <TaskGap />
    <TaskSlot><svg viewBox="0 0 30 30" style={{ width: 34, height: 34 }}><circle cx="15" cy="15" r="13" fill="#7fd13b" stroke="#fff" strokeWidth="1" /><circle cx="15" cy="15" r="8" fill="#fff" /><rect x="5" y="13" width="20" height="4" fill="#7fd13b" /><path d="M22 3c4-2 6 0 4 5" stroke="#5cb82c" fill="none" /></svg></TaskSlot>
    <TaskSlot $bar="#76b9ed"><svg viewBox="0 0 30 30" style={{ width: 32, height: 32 }}><circle cx="15" cy="15" r="14" fill="#e23d2e" /><path d="M15 15L27 8A14 14 0 0 1 15 29z" fill="#f7c51b" /><path d="M15 15L15 29A14 14 0 0 1 2.9 8z" fill="#27a243" /><circle cx="15" cy="15" r="6.5" fill="#fff" /><circle cx="15" cy="15" r="5" fill="#3d7ee8" /></svg></TaskSlot>
    <TaskSlot><svg viewBox="0 0 30 30" style={{ width: 34, height: 34 }}><ellipse cx="13" cy="10" rx="10" ry="8" fill="#eee" stroke="#a03040" strokeWidth="2" /><path d="M13 4l2 12" stroke="#b44" /><path d="M14 14l8 9M20 12l-4 12" stroke="#2f8fdf" strokeWidth="1.6" /><circle cx="23" cy="25" r="2.5" fill="none" stroke="#2f8fdf" strokeWidth="1.6" /><circle cx="15" cy="26" r="2.5" fill="none" stroke="#2f8fdf" strokeWidth="1.6" /></svg></TaskSlot>
    <TaskSlot><svg viewBox="0 0 30 30"><rect x="1" y="3" width="28" height="24" fill="#6fc3ee" stroke="#cdeafa" /><circle cx="10" cy="13" r="5" fill="#fff" stroke="#e8a33a" strokeWidth="1.5" /><path d="M6 22h8M18 9h8M18 13h8M18 17h8M18 21h8" stroke="#1d6fae" strokeWidth="1.4" /></svg></TaskSlot>
    <TaskSlot $bg="#9a5c28" $bar="#ff7a10"><svg viewBox="0 0 30 30"><circle cx="15" cy="15" r="15" fill="#1d3a56" /><path d="M15 5c-4 0-5 2-5 3v3h6v1H8c-2 0-3 2-3 4s1 4 3 4h2v-3c0-2 1-3 3-3h5c1 0 2-1 2-2V8c0-2-2-3-5-3z" fill="#4b8bbe" /><path d="M15 26c4 0 5-2 5-3v-3h-6v-1h8c2 0 3-2 3-4s-1-4-3-4h-2v3c0 2-1 3-3 3h-5c-1 0-2 1-2 2v4c0 2 2 3 5 3z" fill="#ffd43b" /></svg></TaskSlot>
    <TaskSlot $bg="#344b55" $bar="#76b9ed"><svg viewBox="0 0 24 24"><WhLogo /></svg></TaskSlot>
    <TaskSlot $bg="#9a5c28" $bar="#ff7a10"><svg viewBox="0 0 30 30" style={{ width: 36, height: 36 }}><ellipse cx="12" cy="12" rx="11" ry="10" fill="#3dc43d" /><path d="M6 19l-1 5 6-3z" fill="#3dc43d" /><circle cx="8.5" cy="10" r="1.5" fill="#135c13" /><circle cx="15" cy="10" r="1.5" fill="#135c13" /><ellipse cx="21" cy="20" rx="8.5" ry="7.5" fill="#eee" /><path d="M25 25l2 4-5-2z" fill="#eee" /><circle cx="18" cy="19" r="1.2" fill="#777" /><circle cx="24" cy="19" r="1.2" fill="#777" /></svg></TaskSlot>
    <Tray>
      <TrayCell $w={30}><svg viewBox="0 0 22 22" strokeWidth="1.4"><path d="M4 15l7-8 7 8" /></svg></TrayCell>
      <TrayCell $w={30}><svg viewBox="0 0 22 22" style={{ stroke: "none" }}><ellipse cx="11" cy="13" rx="6.5" ry="8" fill="#111" /><ellipse cx="11" cy="15" rx="4" ry="5" fill="#fff" /><rect x="5" y="10" width="12" height="3" fill="#ee1a9a" /><path d="M13 2l4 2-3 3z" fill="#ee1a9a" /><path d="M7 21h3v1H7zM12 21h3v1h-3z" fill="#f5a000" /></svg></TrayCell>
      <TrayCell $w={30}><svg viewBox="0 0 22 22" strokeWidth="1.2"><rect x="6" y="6" width="14" height="11" /><rect x="8" y="8" width="10" height="7" fill="#fff" /><path d="M2 5v4M5 5v4M1 9h5v3H1zM3.5 12v5" /></svg></TrayCell>
      <TrayCell $w={30}><svg viewBox="0 0 22 22" strokeWidth="1.1"><path d="M3 19C4 10 9 5 18 3M6 19c1-6 5-10 11-12M9 19c1-3 3-6 8-7" /><circle cx="16" cy="17" r="1.5" fill="#fff" /></svg></TrayCell>
      <TrayCell $w={30}><svg viewBox="0 0 22 22" strokeWidth="1.1"><path d="M3 8h4l5-5v16l-5-5H3zM15 8c1.5 2 1.5 4 0 6M18 5c3 4 3 8 0 12" /></svg></TrayCell>
      <TrayCell $w={30}>英</TrayCell>
      <ClockCell>17:53<br />2022/3/25</ClockCell>
      <TrayCell $w={56}><svg viewBox="0 0 22 22" strokeWidth="1.1"><path d="M5 2h13v18H5zM8 7h7M8 11h7" /></svg></TrayCell>
      <TrayCell $w={46}><svg viewBox="0 0 22 22" strokeWidth="1.1"><rect x="1" y="2" width="20" height="18" /></svg></TrayCell>
    </Tray>
  </TaskBar>
);

export default function App() {
  return (
    <Screen>
      <Global />
      <TitleBar>
        <TitleLogo viewBox="0 0 24 24"><WhLogo /></TitleLogo>
        <TitleText $w={223}>赢顺云端交易&nbsp;&nbsp;&nbsp;-&nbsp;&nbsp;&nbsp;Ver6.8.348</TitleText>
        <TitleText $w={174}>文华云节点-浙江电信</TitleText>
        <TitleText $w={100}>系统K线图</TitleText>
        <WinControls>
          <WinBtn viewBox="0 0 47 14"><path d="M18 7.5h11" /></WinBtn>
          <WinBtn viewBox="0 0 47 14"><path d="M19 3h8v10h-8zM21 3V1h8v10h-2" /></WinBtn>
          <WinBtn viewBox="0 0 47 14"><path d="M18 1l11 12M29 1L18 13" /></WinBtn>
        </WinControls>
      </TitleBar>
      <ToolBar>
        <Tools />
        <Menu>
          <MenuItem $after={27}>发现<NewBadge>NEW</NewBadge></MenuItem>
          <MenuItem>板块</MenuItem><MenuItem>账户</MenuItem><MenuItem>资讯</MenuItem>
          <MenuItem $after={2}>个性化</MenuItem><MenuItem>系统工具</MenuItem><MenuItem>帮助</MenuItem>
        </Menu>
      </ToolBar>
      <Main>
        <LeftArea>
          <InfoRow>
            <InfoIcon viewBox="0 0 21 12"><path d="M7 2H1v8h6l4-8h9v8h-6" /></InfoIcon>
            <span>沪镍2204</span><InfoSup>M</InfoSup><span>(SHFE ni2204)</span>
            <Period>1分钟<svg width="13" height="8" viewBox="0 0 13 8" fill="none" stroke="#333"><path d="M1 1l5.5 6L12 1" /></svg></Period>
          </InfoRow>
          <Body>
            <RailTabs />
            <Stack>
              <PricePanel />
              <VolumePanel />
              <MacdPanel />
              <TimeAxis />
            </Stack>
          </Body>
        </LeftArea>
        <Right />
      </Main>
      <TabBar>
        <BoardTab $on>我的板块</BoardTab>
        {BOARDS.map(b => <BoardTab key={b}>{b}</BoardTab>)}
        <Plus>+</Plus>
        <Forum>
          <ForumIcon viewBox="0 0 25 22"><path d="M4 14V11a8.5 8.5 0 0 1 17 0v3" /><rect x="2" y="13" width="4" height="7" rx="2" /><rect x="19" y="13" width="4" height="7" rx="2" /></ForumIcon>
          论坛提问
        </Forum>
      </TabBar>
      <StatusBar>
        <Logo>web<LogoS>S</LogoS>tock</Logo>
        <Quote $w={217} $c={GREEN}>上证指数<QuoteNum>3212.24 -38.02</QuoteNum></Quote>
        <Quote $w={221} $c={RED}>文华商品<QuoteNum>226.87 +1.62</QuoteNum></Quote>
        <Quote $w={593} $c="#444">CRB指数<QuoteNum>0.00 0.00</QuoteNum></Quote>
        <Notice>[提醒]有不法网站/直播间假冒文华进行诈骗</Notice>
        <AcctBtn>期货户</AcctBtn>
        <AcctBtn>外盘户</AcctBtn>
        <Dashes>--</Dashes>
        <NetBlock />
        <Signal viewBox="0 0 22 19"><rect x="1" y="14" width="4" height="5" /><rect x="7" y="10" width="4" height="9" /><rect x="13" y="5" width="4" height="14" /><rect x="19" y="0" width="3" height="19" /></Signal>
        <Clock>17:53:50 - wh</Clock>
      </StatusBar>
      <Task />
      <Watermark>CSDN @yuge1023</Watermark>
      <SpeedWidget />
      <OrderDialog />
    </Screen>
  );
}
